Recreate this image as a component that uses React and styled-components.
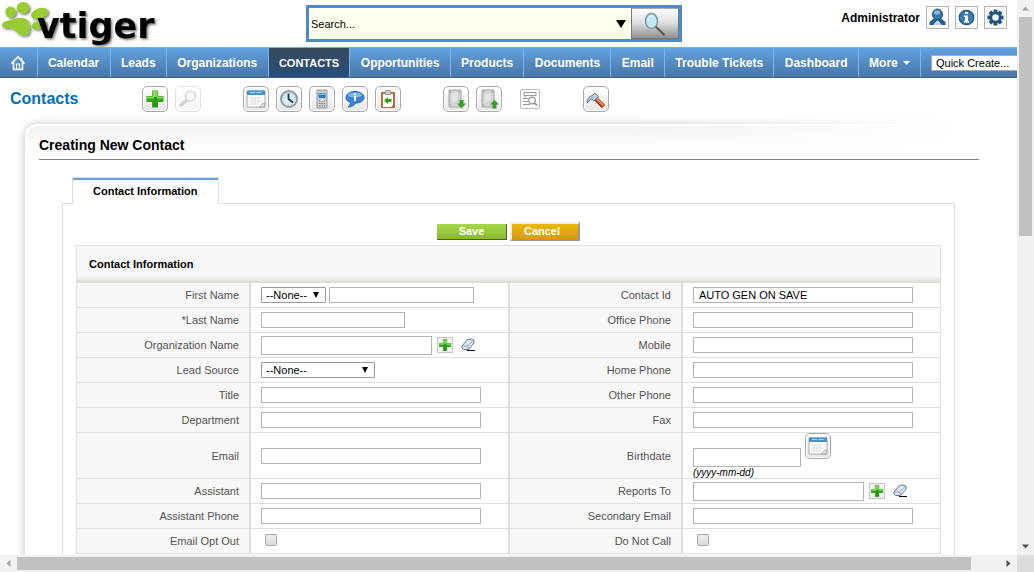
import React from "react";
import styled, { createGlobalStyle, css } from "styled-components";

const Global = createGlobalStyle`
  * { box-sizing: border-box; }
  body {
    margin: 0;
    background: #fff;
    color: #000;
    font-family: "Liberation Sans", Arial, sans-serif;
    font-size: 11px;
  }
  button, input, select { font: inherit; color: inherit; margin: 0; }
`;

/* ---------- window frame ---------- */

const Frame = styled.div`
  display: grid;
  grid-template-columns: minmax(0, 1fr) 17px;
  grid-template-rows: minmax(0, 1fr) 17px;
  height: 100vh;
`;

const Page = styled.div`
  overflow: hidden;
`;

const Track = styled.div`
  display: flex;
  flex-direction: ${(p) => (p.$vertical ? "column" : "row")};
  align-items: stretch;
  background: #f1f1f1;
`;

const TrackEnd = styled.div`
  flex: 0 0 17px;
  display: flex;
  align-items: center;
  justify-content: center;
`;

const TrackBody = styled.div`
  flex: 1;
  padding: ${(p) => (p.$vertical ? "0 2px" : "2px 0")};
`;

const Thumb = styled.div`
  background: #c1c1c1;
  width: ${(p) => (p.$vertical ? "100%" : "97%")};
  height: ${(p) => (p.$vertical ? "42%" : "100%")};
`;

const Corner = styled.div`
  background: #dcdcdc;
`;

const Arrow = ({ turn, color }) => (
  <svg width="9" height="9" viewBox="0 0 9 9" aria-hidden="true">
    <path d="M1 6.5L4.5 2.5L8 6.5Z" fill={color} transform={`rotate(${turn} 4.5 4.5)`} />
  </svg>
);

function Scrollbar({ vertical }) {
  return (
    <Track $vertical={vertical}>
      <TrackEnd><Arrow turn={vertical ? 0 : -90} color="#a3a3a3" /></TrackEnd>
      <TrackBody $vertical={vertical}><Thumb $vertical={vertical} /></TrackBody>
      <TrackEnd><Arrow turn={vertical ? 180 : 90} color="#505050" /></TrackEnd>
    </Track>
  );
}

/* ---------- header ---------- */

const Header = styled.header`
  display: flex;
  align-items: flex-start;
  height: 47px;
`;

const LogoLink = styled.a`
  flex: 0 0 306px;
  height: 47px;
  svg { display: block; }
`;

const SearchForm = styled.form`
  display: flex;
  flex: 0 0 376px;
  height: 37px;
  margin-top: 5px;
  border: 3px solid #4a8ccb;
  background: #ffffee;
`;

const SearchInput = styled.input`
  flex: 1;
  min-width: 0;
  border: 0;
  padding: 0 2px;
  background: transparent;
  outline: none;
  &::placeholder { color: #000; opacity: 1; }
`;

const DropButton = styled.button`
  width: 20px;
  border: 0;
  padding: 0;
  background: none;
  svg { display: block; margin: auto; }
`;

const SearchButton = styled.button`
  width: 48px;
  padding: 0;
  border: 1px solid #777;
  border-top-color: #aaa;
  background: linear-gradient(#fff, #dcdcdc 50%, #8e8e8e);
  svg { display: block; margin: auto; }
`;

const UserArea = styled.div`
  display: flex;
  align-items: center;
  gap: 6px;
  margin: 6px 10px 0 auto;
  font-size: 12px;
  font-weight: bold;
`;

const UserButton = styled.button`
  width: 23px;
  height: 23px;
  padding: 0;
  border: 1px solid #b5b5b5;
  background: #fafafa;
  svg { display: block; margin: auto; }
`;

/* ---------- navigation ---------- */

const Nav = styled.nav`
  display: flex;
  height: 31px;
  border-top: 1px solid #6fb1f0;
  border-bottom: 1px solid #3c638b;
  background: linear-gradient(#62a1e0, #4876a6);
`;

const NavLinks = styled.div`
  display: flex;
  flex: 1 0 auto;
`;

const NavLink = styled.a`
  display: flex;
  flex: 1 0 auto;
  align-items: center;
  justify-content: center;
  gap: 5px;
  padding: 0 10px;
  border-right: 1px solid #7db5ec;
  color: #fff;
  font-size: 12px;
  font-weight: bold;
  text-decoration: none;
  white-space: nowrap;
  ${(p) => p.$active && css`
    background: linear-gradient(#36495c, #254f7c);
    font-size: 11px;
  `}
`;

const QuickCreate = styled.select`
  flex: 0 0 86px;
  align-self: center;
  appearance: none;
  height: 16px;
  margin-left: 10px;
  padding: 0 0 0 4px;
  border: 1px solid #a9a9a9;
  border-right: 0;
  border-radius: 0;
  background: #fff;
`;

/* ---------- tool row ---------- */

const Tools = styled.div`
  display: flex;
  align-items: center;
  height: 41px;
`;

const ModuleLink = styled.a`
  width: 142px;
  padding-left: 10px;
  color: #0070ba;
  font-size: 16px;
  font-weight: bold;
  text-decoration: none;
`;

const ToolGroup = styled.div`
  display: flex;
  align-items: center;
  gap: 7px;
  margin-right: ${(p) => p.$after}px;
`;

const ToolButton = styled.button`
  width: 26px;
  height: 26px;
  padding: 0;
  border: 1px solid #a8a8a8;
  border-radius: 5px;
  background: linear-gradient(#fff, #e6e6e6);
  box-shadow: inset 0 0 0 1px #fff;
  opacity: ${(p) => (p.disabled ? 0.35 : 1)};
  svg { display: block; margin: auto; }
`;

const PlainTool = styled.button`
  width: 20px;
  height: 20px;
  padding: 0;
  border: 1px solid #bbb;
  border-radius: 2px;
  background: #fcfcfc;
  svg { display: block; margin: auto; }
`;

/* ---------- content ---------- */

const Panel = styled.main`
  position: relative;
  margin: 5px 0 0 25px;
  padding: 12px 38px 20px 14px;
  border-top: 2px solid #fff;
  border-left: 2px solid #fff;
  border-top-left-radius: 12px;
  background: linear-gradient(#f1f1f1, #fff 24px);
  box-shadow: 0 0 9px rgba(0, 0, 0, 0.26);

  /* fades the top edge out towards the right */
  &::before {
    content: "";
    position: absolute;
    top: -14px;
    right: 0;
    width: 40%;
    height: 44px;
    background: linear-gradient(to right, rgba(255, 255, 255, 0), #fff 85%);
  }
`;

const Title = styled.h1`
  position: relative;
  margin: 0 0 17px -2px;
  height: 22px;
  border-bottom: 1px solid #808080;
  font-size: 14px;
  line-height: 14px;
`;

const Editor = styled.section`
  margin: 0 24px 0 21px;
`;

const TabBar = styled.div`
  display: flex;
  padding-left: 10px;
`;

const Tab = styled.button`
  height: 27px;
  margin-bottom: -1px;
  padding: 0 20px;
  border: 1px solid #dedede;
  border-bottom: 0;
  background: #fff;
  box-shadow: inset 0 2px 0 #66a3e0;
  font-weight: bold;
`;

const Sheet = styled.form`
  padding: 18px 13px 30px;
  border: 1px solid #dedede;
`;

const Actions = styled.div`
  display: flex;
  justify-content: center;
  align-items: center;
  gap: 3px;
  height: 19px;
  margin-bottom: 4px;
`;

const ActionButton = styled.button`
  width: 70px;
  color: #fff;
  font-weight: bold;
  ${(p) => (p.$kind === "save"
    ? css`
      height: 16px;
      padding: 0;
      border: 0 solid #4e5c38;
      border-width: 0 1px 1px 0;
      background: linear-gradient(#a5d848, #8cb92f);
    `
    : css`
      height: 19px;
      padding: 0 6px 2px 0;
      border: 2px solid;
      border-color: #eee #999 #999 #eee;
      background: linear-gradient(#e9b80f, #d99c05);
    `)}
`;

const Block = styled.section`
  border: 1px solid #dedede;
  border-bottom: 0;
`;

const BlockTitle = styled.h2`
  height: 37px;
  margin: 0;
  padding-left: 12px;
  background: linear-gradient(#f7f7f7 30px, #d8d8d3);
  font-size: 11px;
  line-height: 37px;
`;

const Fields = styled.table`
  width: 100%;
  table-layout: fixed;
  border-collapse: separate;
  border-spacing: 0;
`;

const LabelCol = styled.col`
  width: ${(p) => p.$w}px;
`;

const FieldCol = styled.col`
  width: 30%;
`;

const LabelCell = styled.th`
  height: ${(p) => (p.$tall ? 46 : 25)}px;
  padding: 0 10px;
  border-right: 2px solid #dedede;
  border-bottom: 1px solid #dedede;
  background: #f7f7f7;
  color: #545454;
  font-weight: normal;
  text-align: right;
`;

const FieldCell = styled.td`
  padding: 0 0 0 10px;
  border-bottom: 1px solid #dedede;
  &:not(:last-child) { border-right: 2px solid #dedede; }
`;

const Line = styled.div`
  display: flex;
  align-items: center;
`;

const TextInput = styled.input`
  width: ${(p) => p.$w}px;
  height: ${(p) => (p.$large ? 19 : 16)}px;
  padding: 0 5px;
  border: 1px solid #b3b3b3;
  background: #fff;
`;

const SelectWrap = styled.span`
  position: relative;
  display: inline-flex;
  margin-right: 3px;
  svg { position: absolute; right: 7px; top: 5px; pointer-events: none; }
`;

const SelectBox = styled.select`
  appearance: none;
  width: ${(p) => p.$w}px;
  height: 16px;
  padding: 0 4px;
  border: 1px solid #999;
  border-radius: 1px;
  background: #fff;
`;

const MiniButton = styled.button`
  width: 16px;
  height: 16px;
  margin-left: 5px;
  padding: 0;
  border: ${(p) => (p.$bare ? "0" : "1px solid #c4c4c4")};
  background: ${(p) => (p.$bare ? "none" : "#f4f4f4")};
  & + & { margin-left: 7px; }
  svg { display: block; margin: auto; }
`;

const DateLine = styled.div`
  display: flex;
  align-items: flex-start;
  gap: 4px;
  height: 45px;
`;

const DateEntry = styled.div`
  padding-top: 15px;
`;

const Hint = styled.em`
  display: block;
  font-size: 10px;
  line-height: 11px;
`;

const Check = styled.input`
  display: block;
  appearance: none;
  width: 12px;
  height: 12px;
  margin: 0 0 2px 4px;
  border: 1px solid #a6a6a6;
  border-radius: 2px;
  background: linear-gradient(#eee, #dcdcdc);
`;

/* ---------- drawings ---------- */

const Logo = () => (
  <svg width="170" height="47" viewBox="0 0 170 47" role="img" aria-label="vtiger">
    <defs>
      <filter id="soft" x="-10%" y="-10%" width="125%" height="130%">
        <feDropShadow dx="1.5" dy="1.5" stdDeviation="1" floodColor="#000" floodOpacity="0.55" />
      </filter>
    </defs>
    <g fill="#99cc33" filter="url(#soft)">
      <ellipse cx="10.5" cy="12" rx="5.2" ry="5.6" />
      <ellipse cx="23" cy="7.800" rx="6.300" ry="5.700" />
      <ellipse cx="39.500" cy="13.500" rx="8.800" ry="5.200" transform="rotate(-18 39.5 13.5)" />
      <ellipse cx="39" cy="25" rx="7.800" ry="4" transform="rotate(-12 39 25)" />
      <path d="M2 25C2 21 8 21 12 19.500C18 17.500 25 16.500 28 21C30 24 30.500 29 29 33C27 36.500 21 36 18 33.500C15 30 13 28 9 28C5 28 2 28 2 25Z" />
    </g>
    <text x="37" y="38" fontFamily="DejaVu Sans, sans-serif" fontSize="35" fontWeight="bold" filter="url(#soft)">vtiger</text>
  </svg>
);

const Triangle = ({ w = 6, h = 6, fill = "#000" }) => (
  <svg width={w} height={h} viewBox="0 0 10 10" preserveAspectRatio="none" aria-hidden="true">
    <path d="M0 0H10L5 10Z" fill={fill} />
  </svg>
);

const Magnifier = () => (
  <svg width="26" height="26" viewBox="0 0 26 26" aria-hidden="true">
    <path d="M13.500 15.500L22.500 24" stroke="#555" strokeWidth="2" />
    <ellipse cx="9.500" cy="10" rx="6" ry="7.500" fill="#c3e8f5" stroke="#7598a5" strokeWidth="1.500" />
    <path d="M6 10C6 6 9 5 11 5" stroke="#fff" fill="none" />
  </svg>
);

const Person = () => (
  <svg width="19" height="19" viewBox="0 0 19 19" aria-hidden="true">
    <path d="M1.500 17V14L6 10.500H13L17.500 14V17H13L9.500 12L6 17Z" fill="#235d8f" />
    <path d="M5 17L9.500 12L14 17Z" fill="#b8d4e8" />
    <ellipse cx="9.500" cy="6.500" rx="5" ry="5.500" fill="#3973a6" stroke="#174d7a" />
    <ellipse cx="9" cy="4.500" rx="3" ry="2.200" fill="#8ab8dc" />
  </svg>
);

const Info = () => (
  <svg width="19" height="19" viewBox="0 0 19 19" aria-hidden="true">
    <circle cx="9.500" cy="9.500" r="7.200" fill="#407dad" stroke="#1d5586" strokeWidth="1.300" />
    <path d="M8 4H11V6H8ZM7 7.500H11V13H12V14.500H7V13H8V9H7Z" fill="#fff" />
  </svg>
);

const Gear = () => (
  <svg width="19" height="19" viewBox="0 0 19 19" aria-hidden="true">
    <g fill="#215480">
      {[0, 45, 90, 135].map((a) => (
        <rect key={a} x="7.500" y="1.500" width="4" height="16" rx="0.500" transform={`rotate(${a} 9.500 9.500)`} />
      ))}
    </g>
    <circle cx="9.500" cy="9.500" r="4.500" fill="#fafafa" stroke="#215480" strokeWidth="2.500" />
  </svg>
);

const Home = () => (
  <svg width="16" height="16" viewBox="0 0 16 16" aria-hidden="true">
    <path d="M1.500 8.500L8 2L14.500 8.500M3.500 7V14.500H12.500V7M11.500 3V5" fill="none" stroke="#fff" strokeWidth="1.600" />
    <path d="M6.500 14V9H9.500V14" fill="none" stroke="#fff" strokeWidth="1.200" />
  </svg>
);

const Plus = ({ size = 20 }) => (
  <svg width={size} height={size} viewBox="0 0 20 20" aria-hidden="true">
    <path d="M7 1.500H13V7H18.500V13H13V18.500H7V13H1.500V7H7Z" fill="#35a51b" />
    <path d="M7.500 2H12.500V7.500H18V9.500H2V7.500H7.500Z" fill="#83d65b" />
    <path d="M9 8H12V18H9Z" fill="#299413" />
  </svg>
);

const Lens = () => (
  <svg width="20" height="20" viewBox="0 0 20 20" aria-hidden="true">
    <path d="M2 17L9 11" stroke="#777" strokeWidth="3" />
    <circle cx="12.500" cy="7" r="4.800" fill="#f5f5f5" stroke="#888" strokeWidth="1.500" />
  </svg>
);

const CalendarIcon = () => (
  <svg width="20" height="20" viewBox="0 0 20 20" aria-hidden="true">
    <path d="M1 2H19V18H1Z" fill="#fff" stroke="#aaa" />
    <path d="M1 1.500H19V6H1Z" fill="#4a91d4" />
    <path d="M4 3.500H16" stroke="#b8d9f5" strokeDasharray="5 1.500" />
    <path d="M3 9H17M3 12H17M3 15H13M6 8V16M9 8V16M12 8V16" stroke="#dedede" />
    <path d="M13 18C15 17 14 14 18.500 14L18.500 18Z" fill="#ddd" stroke="#999" strokeWidth="0.600" />
  </svg>
);

const Clock = () => (
  <svg width="20" height="20" viewBox="0 0 20 20" aria-hidden="true">
    <circle cx="10" cy="10" r="8" fill="#d9edf7" stroke="#8c9ba3" strokeWidth="2" />
    <circle cx="10" cy="10" r="6" fill="none" stroke="#88b8d2" strokeDasharray="1 2.140" />
    <path d="M9.500 4.500V10L14 13.500" fill="none" stroke="#213a49" strokeWidth="1.800" />
  </svg>
);

const Phone = () => (
  <svg width="20" height="20" viewBox="0 0 20 20" aria-hidden="true">
    <path d="M5 1H15V19H5Z" fill="#c9ced1" stroke="#959b9e" />
    <path d="M6.500 4H13.500V9H6.500Z" fill="#287bc8" />
    <path d="M7 4.500H13V6H7Z" fill="#75c0f4" />
    <path d="M7 12H13M7 14.500H13M7 17H13" stroke="#777" strokeDasharray="1.500 1" />
    <path d="M8.500 10H11.500V12H8.500Z" fill="#eee" />
  </svg>
);

const Bubble = () => (
  <svg width="20" height="20" viewBox="0 0 20 20" aria-hidden="true">
    <path d="M10 2.500C15 2.500 19 5 19 8.500C19 12 15 14 11 14C9 16 7 18 3 18C5 16 5.500 15 5.500 13.500C2.500 12.500 1 11 1 8.500C1 5 5 2.500 10 2.500Z" fill="#3d82d6" stroke="#266abd" />
    <ellipse cx="10" cy="6" rx="7" ry="2.500" fill="#82b8f1" />
    <path d="M9 4.500H11V6H9ZM9 7H11V12H9Z" fill="#fff" />
  </svg>
);

const Clipboard = () => (
  <svg width="20" height="20" viewBox="0 0 20 20" aria-hidden="true">
    <path d="M3 3H17V19H3Z" fill="#b37142" />
    <path d="M5 5H15V16L13 18H5Z" fill="#fff" />
    <path d="M7 4L8 1.500H12L13 4V5.500H7Z" fill="#ccc" stroke="#777" strokeWidth="0.700" />
    <path d="M6 11.500L10 8V10H13.500V13H10V15Z" fill="#2f9c19" />
  </svg>
);

const Disk = ({ up }) => (
  <svg width="22" height="22" viewBox="0 0 22 22" aria-hidden="true">
    <path d="M4 2H16V19H4Z" fill="#d6d6d6" stroke="#a2a2a2" />
    <path d="M6 4.500L13.500 4V12L8 16L6 15Z" fill="#e4e4e4" stroke="#c4c4c4" strokeWidth="0.700" />
    <path d="M5 4H6M14 4H15M5 17H6" stroke="#777" />
    {up
      ? <path d="M16.500 12L21 16.500H18.500V20.500H14.500V16.500H12Z" fill="#2fa41b" />
      : <path d="M14.500 12H18.500V15.500H21L16.500 20.500L12 15.500H14.500Z" fill="#2fa41b" />}
  </svg>
);

const FindDuplicates = () => (
  <svg width="16" height="16" viewBox="0 0 16 16" fill="none" stroke="#999" aria-hidden="true">
    <path d="M2 1.500H14V4.500H2ZM1 7.500H6M1 10.500H6M1 13.500H8M3 5V7" />
    <circle cx="10" cy="9.500" r="3.300" strokeWidth="1.300" />
    <path d="M12.500 12L15 14.500" strokeWidth="1.800" />
  </svg>
);

const Hammer = () => (
  <svg width="22" height="22" viewBox="0 0 22 22" aria-hidden="true">
    <path d="M10 10L18.500 18.500" stroke="#8a2313" strokeWidth="4.500" />
    <path d="M10 9.500L18.500 18" stroke="#e8672c" strokeWidth="2.500" />
    <path d="M11.500 10.500L18 17" stroke="#fbd0a5" strokeWidth="0.800" />
    <path d="M2.500 15C2 10 5 8 7.500 7.500L10 5L13.500 8.500L9 13L7 11C5 11.500 3.500 13 2.500 15Z" fill="#b9cbe3" stroke="#4a5f85" strokeWidth="0.800" />
  </svg>
);

const Eraser = () => (
  <svg width="16" height="16" viewBox="0 0 16 16" aria-hidden="true">
    <path d="M7.500 2.500L12.500 2L14 3.500V6L8.500 12.500H3.500L2 11V9Z" fill="#dfe8f5" stroke="#60708c" />
    <path d="M2.500 9L7.500 9L13.500 3M7.500 9L8.500 12" fill="none" stroke="#8fa1bf" />
    <path d="M7 13.500H15" stroke="#000" />
  </svg>
);

/* ---------- form ---------- */

function Picker({ id, label, width }) {
  return (
    <SelectWrap>
      <SelectBox id={id} aria-label={label} $w={width}>
        <option>--None--</option>
      </SelectBox>
      <Triangle />
    </SelectWrap>
  );
}

function Control({ field, id }) {
  switch (field.type) {
    case "name":
      return (
        <Line>
          <Picker label="Salutation" width={65} />
          <TextInput id={id} $w={145} />
        </Line>
      );
    case "select":
      return <Line><Picker id={id} width={114} /></Line>;
    case "lookup":
      return (
        <Line>
          <TextInput id={id} $w={171} $large />
          <MiniButton type="button" aria-label={`Select ${field.label}`}><Plus size={14} /></MiniButton>
          <MiniButton type="button" aria-label={`Clear ${field.label}`} $bare><Eraser /></MiniButton>
        </Line>
      );
    case "date":
      return (
        <DateLine>
          <DateEntry>
            <TextInput id={id} $w={108} $large />
            <Hint>(yyyy-mm-dd)</Hint>
          </DateEntry>
          <ToolButton type="button" aria-label="Pick a date"><CalendarIcon /></ToolButton>
        </DateLine>
      );
    case "check":
      return <Check id={id} type="checkbox" />;
    default:
      return <Line><TextInput id={id} $w={field.width || 220} defaultValue={field.value} /></Line>;
  }
}

const rows = [
  [{ label: "First Name", type: "name" }, { label: "Contact Id", value: "AUTO GEN ON SAVE" }],
  [{ label: "*Last Name", width: 144 }, { label: "Office Phone" }],
  [{ label: "Organization Name", type: "lookup" }, { label: "Mobile" }],
  [{ label: "Lead Source", type: "select" }, { label: "Home Phone" }],
  [{ label: "Title" }, { label: "Other Phone" }],
  [{ label: "Department" }, { label: "Fax" }],
  [{ label: "Email" }, { label: "Birthdate", type: "date" }],
  [{ label: "Assistant" }, { label: "Reports To", type: "lookup" }],
  [{ label: "Assistant Phone" }, { label: "Secondary Email" }],
  [{ label: "Email Opt Out", type: "check" }, { label: "Do Not Call", type: "check" }],
];

const modules = [
  "Calendar", "Leads", "Organizations", "CONTACTS", "Opportunities", "Products",
  "Documents", "Email", "Trouble Tickets", "Dashboard",
];

const toolGroups = [
  { after: 42, items: [["Create Contact", Plus], ["Search", Lens, true]] },
  { after: 42, items: [["Calendar", CalendarIcon], ["Clock", Clock], ["Phone", Phone], ["Chat", Bubble], ["Recent", Clipboard]] },
];

export default function App() {
  return (
    <>
      <Global />
      <Frame>
        <Page>
          <Header>
            <LogoLink href="#"><Logo /></LogoLink>
            <SearchForm>
              <SearchInput aria-label="Search" placeholder="Search..." />
              <DropButton type="button" aria-label="Search options"><Triangle w={10} h={8} /></DropButton>
              <SearchButton type="button" aria-label="Find"><Magnifier /></SearchButton>
            </SearchForm>
            <UserArea>
              <span>Administrator</span>
              <UserButton aria-label="User"><Person /></UserButton>
              <UserButton aria-label="Help"><Info /></UserButton>
              <UserButton aria-label="Settings"><Gear /></UserButton>
            </UserArea>
          </Header>

          <Nav>
            <NavLinks>
              <NavLink href="#" aria-label="Home"><Home /></NavLink>
              {modules.map((name) => (
                <NavLink key={name} href="#" $active={name === "CONTACTS"}>{name}</NavLink>
              ))}
              <NavLink href="#">More <Triangle w={7} h={4} fill="#fff" /></NavLink>
            </NavLinks>
            <QuickCreate aria-label="Quick Create"><option>Quick Create...</option></QuickCreate>
          </Nav>

          <Tools>
            <ModuleLink href="#">Contacts</ModuleLink>
            {toolGroups.map((group, i) => (
              <ToolGroup key={i} $after={group.after}>
                {group.items.map(([label, Icon, off]) => (
                  <ToolButton key={label} aria-label={label} disabled={off}><Icon /></ToolButton>
                ))}
              </ToolGroup>
            ))}
            <ToolGroup $after={18}>
              <ToolButton aria-label="Import"><Disk /></ToolButton>
              <ToolButton aria-label="Export"><Disk up /></ToolButton>
            </ToolGroup>
            <ToolGroup $after={43}>
              <PlainTool aria-label="Find Duplicates"><FindDuplicates /></PlainTool>
            </ToolGroup>
            <ToolButton aria-label="Module Settings"><Hammer /></ToolButton>
          </Tools>

          <Panel>
            <Title>Creating New Contact</Title>
            <Editor>
              <TabBar><Tab type="button">Contact Information</Tab></TabBar>
              <Sheet>
                <Actions>
                  <ActionButton type="button" $kind="save">Save</ActionButton>
                  <ActionButton type="button" $kind="cancel">Cancel</ActionButton>
                </Actions>
                <Block>
                  <BlockTitle>Contact Information</BlockTitle>
                  <Fields>
                    <colgroup><LabelCol $w={174} /><FieldCol /><LabelCol $w={173} /><col /></colgroup>
                    <tbody>
                      {rows.map((pair, r) => (
                        <tr key={r}>
                          {pair.map((field, c) => {
                            const id = `field-${r}-${c}`;
                            return (
                              <React.Fragment key={id}>
                                <LabelCell scope="row" $tall={pair[1].type === "date"}>
                                  <label htmlFor={id}>{field.label}</label>
                                </LabelCell>
                                <FieldCell><Control field={field} id={id} /></FieldCell>
                              </React.Fragment>
                            );
                          })}
                        </tr>
                      ))}
                    </tbody>
                  </Fields>
                </Block>
              </Sheet>
            </Editor>
          </Panel>
        </Page>
        <Scrollbar vertical />
        <Scrollbar />
        <Corner />
      </Frame>
    </>
  );
}
